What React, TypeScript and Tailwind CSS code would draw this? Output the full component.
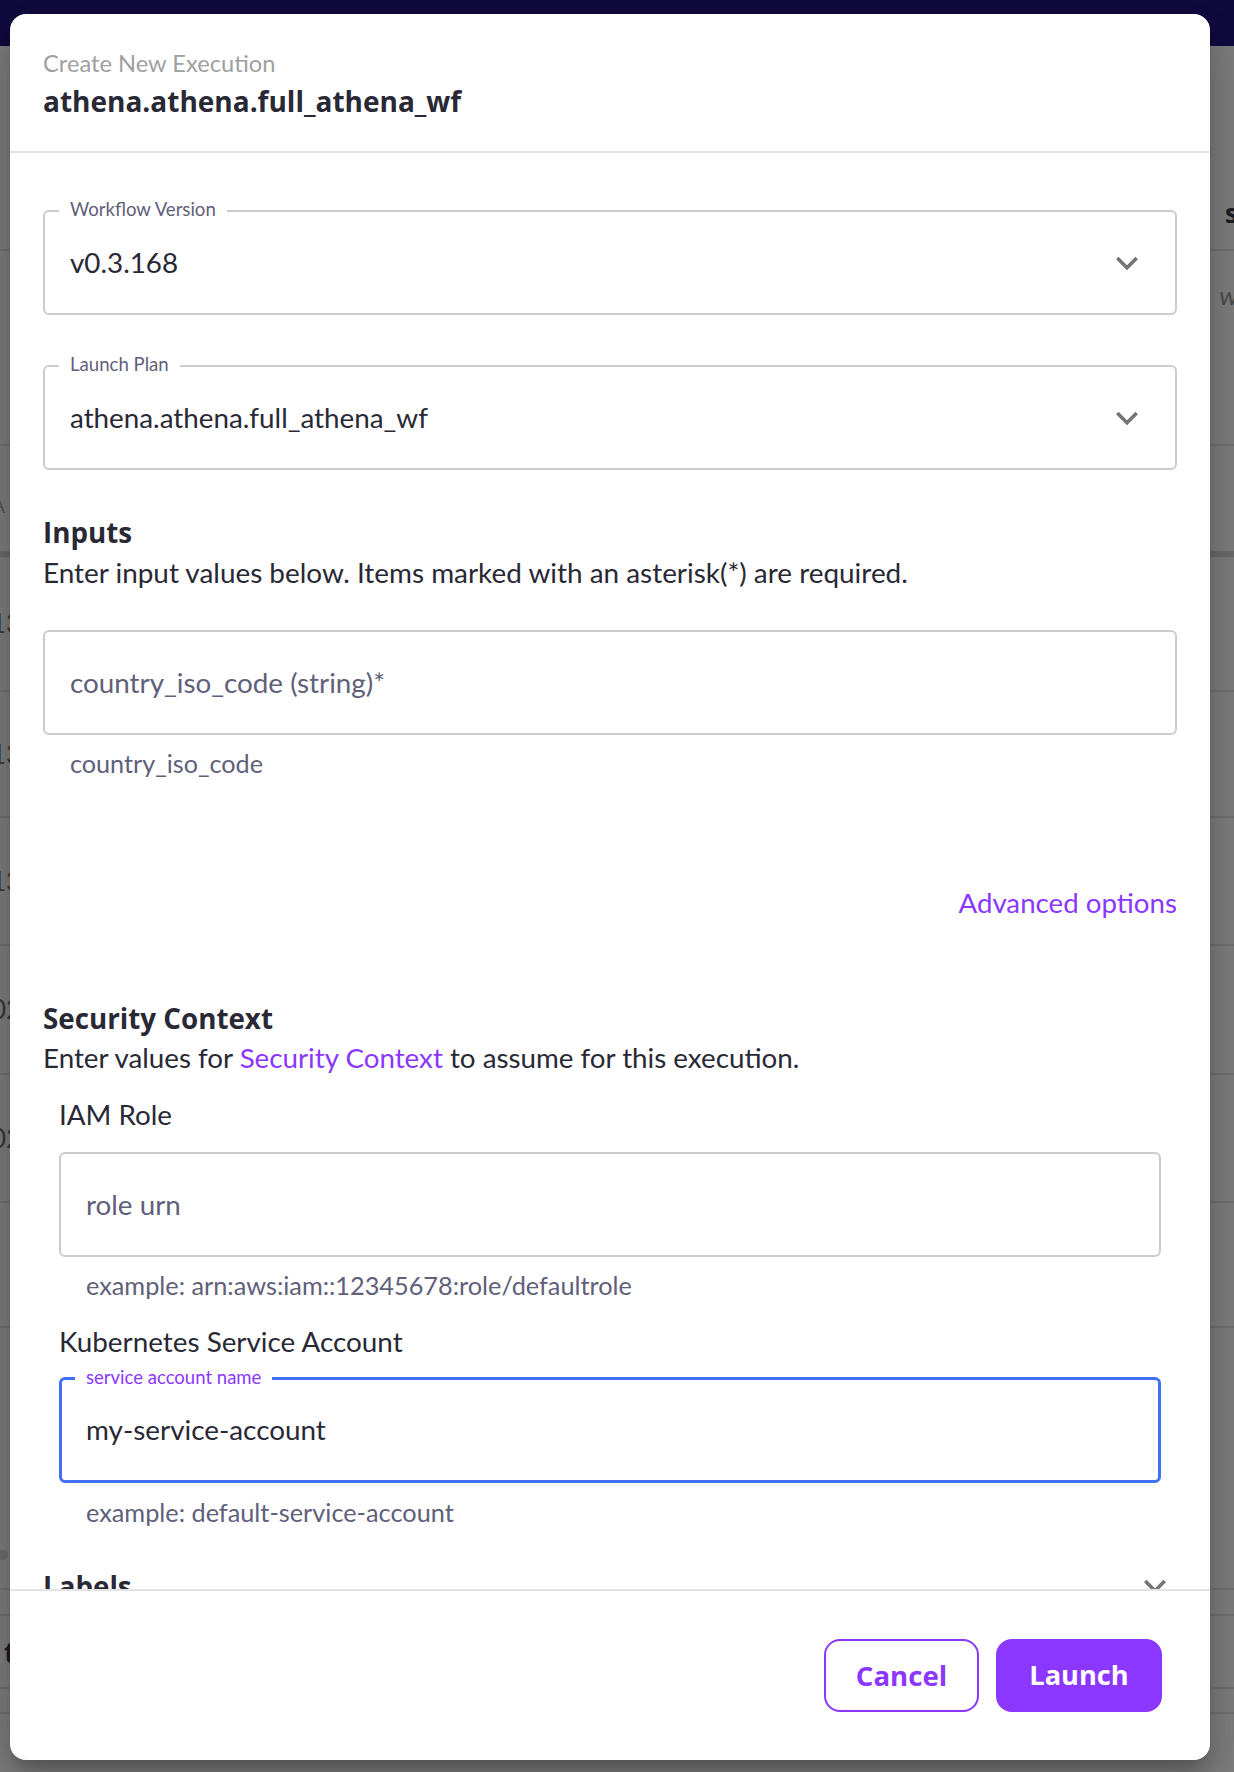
import React from "react";

const LATO = "font-['Lato',sans-serif]";
const OPEN = "font-['Open_Sans',sans-serif]";

function Chevron({ className }: { className?: string }) {
  return (
    <svg viewBox="0 0 24 24" className={className} fill="currentColor" aria-hidden="true">
      <path d="M16.59 8.59L12 13.17 7.41 8.59 6 10l6 6 6-6z" />
    </svg>
  );
}

function SelectField({ label, value }: { label: string; value: string }) {
  return (
    <div className="relative h-[105px] rounded-md border-2 border-[#cccccc] flex items-center pl-[25px] pr-[26px]">
      <span
        className={`absolute left-[14px] top-[-2px] -translate-y-[55%] bg-white px-[11px] text-[18.6px] leading-[24px] text-[#60607a] ${LATO}`}
      >
        {label}
      </span>
      <span className={`flex-1 text-[27.8px] leading-[34px] text-[#292936] ${LATO}`}>{value}</span>
      <Chevron className="w-[44px] h-[44px] text-[#757575]" />
    </div>
  );
}

function BgRow({
  h,
  left,
  right,
  leftCls,
  rightCls,
  band,
}: {
  h: number;
  left?: string;
  right?: string;
  leftCls?: string;
  rightCls?: string;
  band?: boolean;
}) {
  return (
    <div
      className={`relative flex items-center justify-between ${
        band ? "border-b-[6px] border-[#6c6c6c]" : "border-b-2 border-[#727272]"
      }`}
      style={{ height: h }}
    >
      <span className={`-ml-[9px] ${leftCls ?? ""}`}>{left}</span>
      <span className={`-mr-[4px] ${rightCls ?? ""}`}>{right}</span>
    </div>
  );
}

export default function App() {
  return (
    <div className="relative w-[1234px] h-[1772px] overflow-hidden bg-[#7f7f7f]">
      {/* background page (under the modal overlay) */}
      <div className="h-[46px] bg-[#110a3f]" />
      <div className={`${LATO} text-[26px]`}>
        <BgRow h={205} right="s" rightCls={`${OPEN} font-bold text-[#1c1c24] translate-y-[66px]`} />
        <BgRow h={195} right="w" rightCls="italic text-[#4d4d4d] translate-y-[-52px]" />
        <BgRow h={111} left="A" leftCls={`${OPEN} text-[#555] text-[22px] translate-y-[6px]`} band />
        <BgRow h={135} left="13" leftCls="text-[#3a3a3a]" />
        <BgRow h={126} left="13" leftCls="text-[#3a3a3a]" />
        <BgRow h={128} left="13" leftCls="text-[#3a3a3a]" />
        <BgRow h={129} left="02" leftCls="text-[#3a3a3a]" />
        <BgRow h={128} left="02" leftCls="text-[#3a3a3a]" />
        <BgRow h={125} />
        <div className="relative h-[262px] border-b-2 border-[#727272] flex items-end pb-[28px]">
          <div className="-ml-[6px] w-[14px] h-[10px] rounded-full bg-[#6f6f6f]" />
        </div>
        <div className="h-[26px] border-b-2 border-[#727272]" />
        <BgRow h={73} left="t" leftCls={`${OPEN} font-bold text-[#1c1c28] text-[28px] ml-[4px]`} />
        <div className="h-[25px] border-b-2 border-[#727272]" />
      </div>

      {/* modal dialog */}
      <div className="absolute left-[10px] top-[14px] w-[1200px] h-[1746px] bg-white rounded-2xl shadow-[0_11px_15px_-7px_rgba(0,0,0,0.2),0_24px_38px_3px_rgba(0,0,0,0.14),0_9px_46px_8px_rgba(0,0,0,0.12)] flex flex-col overflow-hidden">
        <header className="h-[137px] shrink-0 px-[33px] pt-[35px]">
          <div className={`text-[23.7px] leading-[28px] text-[#a0a0a0] ${LATO}`}>Create New Execution</div>
          <div className={`mt-[6px] text-[28px] leading-[36px] font-bold text-[#292936] ${OPEN}`}>
            athena.athena.full_athena_wf
          </div>
        </header>
        <div className="h-[2px] shrink-0 bg-[#e4e4e4]" />

        <div className="flex-1 overflow-hidden px-[33px] pt-[57px]">
          <SelectField label="Workflow Version" value="v0.3.168" />
          <div className="mt-[50px]">
            <SelectField label="Launch Plan" value="athena.athena.full_athena_wf" />
          </div>

          <div className={`mt-[46px] text-[27.75px] leading-[32px] font-bold text-[#292936] ${OPEN}`}>Inputs</div>
          <div className={`mt-[7px] text-[27.9px] leading-[34px] text-[#292936] ${LATO}`}>
            Enter input values below. Items marked with an asterisk(*) are required.
          </div>

          <div className="mt-[41px] h-[105px] rounded-md border-2 border-[#cccccc] flex items-center pl-[25px]">
            <span className={`text-[27.8px] leading-[34px] text-[#60607a] ${LATO}`}>country_iso_code (string)*</span>
          </div>
          <div className={`mt-[15px] px-[27px] text-[25.2px] leading-[26px] text-[#60607a] ${LATO}`}>
            country_iso_code
          </div>

          <div className={`mt-[112px] flex justify-end text-[27.7px] leading-[30px] text-[#8b37ff] ${LATO}`}>
            <span>Advanced options</span>
          </div>

          <div className={`mt-[84px] text-[27.75px] leading-[32px] font-bold text-[#292936] ${OPEN}`}>
            Security Context
          </div>
          <div className={`mt-[7px] text-[27.75px] leading-[34px] text-[#292936] ${LATO}`}>
            Enter values for <span className="text-[#8b37ff]">Security Context</span> to assume for this execution.
          </div>

          <div className="px-[16px]">
            <div className={`mt-[23px] text-[27.8px] leading-[34px] text-[#292936] ${LATO}`}>IAM Role</div>
            <div className="mt-[20px] h-[105px] rounded-md border-2 border-[#cccccc] flex items-center pl-[25px]">
              <span className={`text-[27.8px] leading-[34px] text-[#60607a] ${LATO}`}>role urn</span>
            </div>
            <div className={`mt-[15px] px-[27px] text-[25.3px] leading-[26px] text-[#60607a] ${LATO}`}>
              example: arn:aws:iam::12345678:role/defaultrole
            </div>

            <div className={`mt-[27px] text-[27.85px] leading-[34px] text-[#292936] ${LATO}`}>
              Kubernetes Service Account
            </div>
            <div className="relative mt-[18px] h-[106px] rounded-md border-[3px] border-[#4070f4] flex items-center pl-[24px]">
              <span
                className={`absolute left-[13px] top-[-2px] -translate-y-[55%] bg-white px-[11px] text-[18.55px] leading-[22px] text-[#8b37ff] ${LATO}`}
              >
                service account name
              </span>
              <span className={`text-[27.85px] leading-[34px] text-[#292936] ${LATO}`}>my-service-account</span>
            </div>
            <div className={`mt-[16px] px-[27px] text-[25.3px] leading-[26px] text-[#60607a] ${LATO}`}>
              example: default-service-account
            </div>
          </div>

          <div className="mt-[39px] h-[44px] flex items-center justify-between">
            <span className={`text-[27.75px] leading-[32px] font-bold text-[#292936] ${OPEN}`}>Labels</span>
            <Chevron className="w-[44px] h-[44px] text-[#757575]" />
          </div>
        </div>

        <div className="h-[2px] shrink-0 bg-[#e4e4e4]" />
        <footer className="h-[169px] shrink-0 flex items-center justify-end gap-[17px] pr-[48px]">
          <button
            className={`w-[155px] h-[73px] rounded-[16px] border-2 border-[#8b37ff] bg-white text-[#8b37ff] text-[27.6px] font-bold ${OPEN}`}
          >
            Cancel
          </button>
          <button
            className={`w-[166px] h-[73px] rounded-[16px] bg-[#8b37ff] text-white text-[27.2px] font-bold ${OPEN}`}
          >
            Launch
          </button>
        </footer>
      </div>
    </div>
  );
}
